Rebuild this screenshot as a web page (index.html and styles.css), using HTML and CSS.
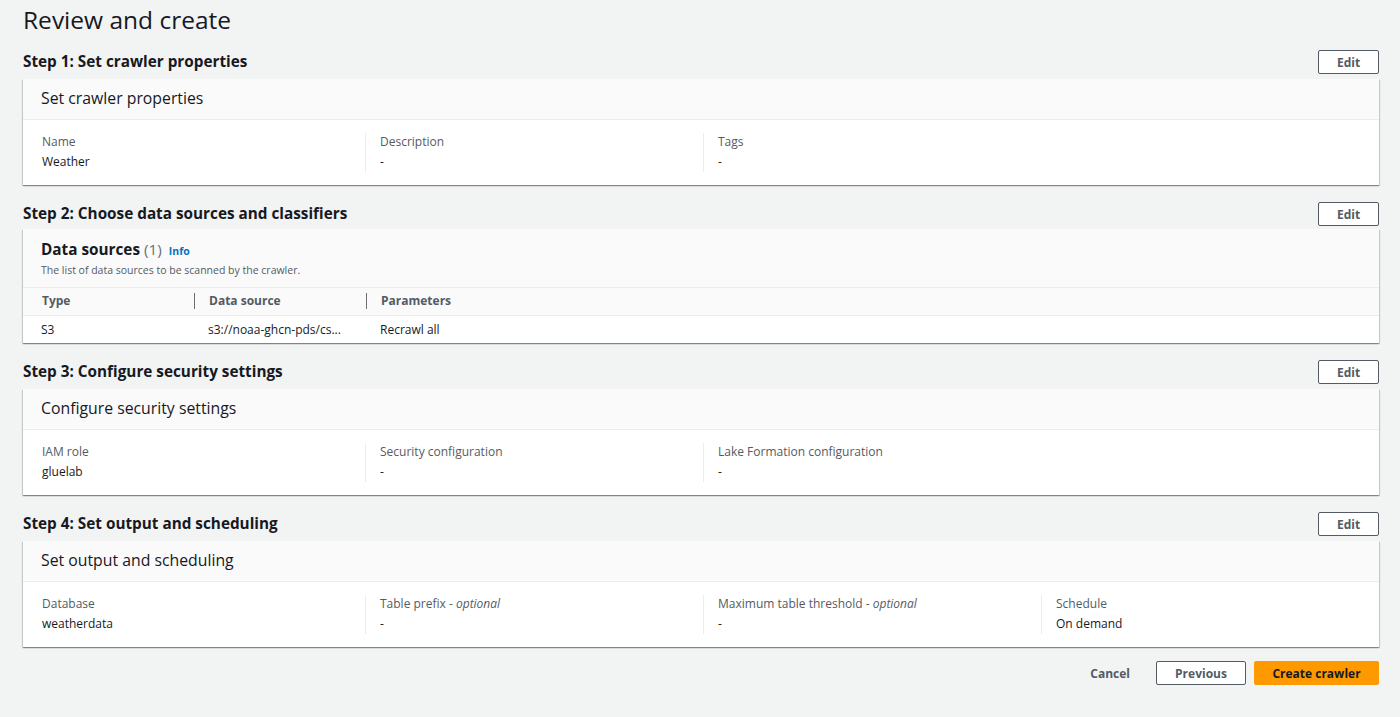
FILE: index.html
```html
<!DOCTYPE html>
<html lang="en">
<head>
  <meta charset="UTF-8" />
  <meta name="viewport" content="width=device-width, initial-scale=1.0" />
  <title>Review and create</title>
  <link rel="stylesheet" href="styles.css">
</head>
<body>
  <main class="page">
    <h1 class="page-title">Review and create</h1>

    <!-- Step 1 -->
    <section class="step">
      <div class="step-head">
        <h2>Step 1: Set crawler properties</h2>
        <button class="btn">Edit</button>
      </div>
      <div class="card">
        <div class="card-header"><h3>Set crawler properties</h3></div>
        <div class="kv">
          <div class="kv-col"><div class="kv-label">Name</div><div class="kv-value">Weather</div></div>
          <div class="kv-col"><div class="kv-label">Description</div><div class="kv-value">-</div></div>
          <div class="kv-col"><div class="kv-label">Tags</div><div class="kv-value">-</div></div>
          <div class="kv-col kv-empty"></div>
        </div>
      </div>
    </section>

    <!-- Step 2 -->
    <section class="step">
      <div class="step-head">
        <h2>Step 2: Choose data sources and classifiers</h2>
        <button class="btn">Edit</button>
      </div>
      <div class="card card-table">
        <div class="table-header">
          <h3 class="table-title">Data sources <span class="count">(1)</span> <a class="info" href="#">Info</a></h3>
          <p class="table-desc">The list of data sources to be scanned by the crawler.</p>
        </div>
        <table class="data-table">
          <thead>
            <tr>
              <th class="col-type"><span>Type</span></th>
              <th class="col-source"><span>Data source</span></th>
              <th><span>Parameters</span></th>
            </tr>
          </thead>
          <tbody>
            <tr>
              <td>S3</td>
              <td>s3://noaa-ghcn-pds/cs...</td>
              <td>Recrawl all</td>
            </tr>
          </tbody>
        </table>
      </div>
    </section>

    <!-- Step 3 -->
    <section class="step">
      <div class="step-head">
        <h2>Step 3: Configure security settings</h2>
        <button class="btn">Edit</button>
      </div>
      <div class="card">
        <div class="card-header"><h3>Configure security settings</h3></div>
        <div class="kv">
          <div class="kv-col"><div class="kv-label">IAM role</div><div class="kv-value">gluelab</div></div>
          <div class="kv-col"><div class="kv-label">Security configuration</div><div class="kv-value">-</div></div>
          <div class="kv-col"><div class="kv-label">Lake Formation configuration</div><div class="kv-value">-</div></div>
          <div class="kv-col kv-empty"></div>
        </div>
      </div>
    </section>

    <!-- Step 4 -->
    <section class="step">
      <div class="step-head">
        <h2>Step 4: Set output and scheduling</h2>
        <button class="btn">Edit</button>
      </div>
      <div class="card">
        <div class="card-header"><h3>Set output and scheduling</h3></div>
        <div class="kv">
          <div class="kv-col"><div class="kv-label">Database</div><div class="kv-value">weatherdata</div></div>
          <div class="kv-col"><div class="kv-label">Table prefix - <i>optional</i></div><div class="kv-value">-</div></div>
          <div class="kv-col"><div class="kv-label">Maximum table threshold - <i>optional</i></div><div class="kv-value">-</div></div>
          <div class="kv-col"><div class="kv-label">Schedule</div><div class="kv-value">On demand</div></div>
        </div>
      </div>
    </section>

    <div class="actions">
      <button class="btn btn-link">Cancel</button>
      <button class="btn btn-prev">Previous</button>
      <button class="btn btn-primary">Create crawler</button>
    </div>
  </main>
</body>
</html>
```

FILE: styles.css
```css
/* Global Styles */
* {
  box-sizing: border-box;
}
body {
  margin: 0;
  font-family: 'Open Sans', 'Liberation Sans', sans-serif;
  background-color: #f2f3f3;
  color: #16191f;
}
.page {
  padding: 4px 21px 20px 23px;
}
.page-title {
  margin: 0 0 14px;
  font-size: 24.5px;
  font-weight: 400;
  line-height: 32px;
  color: #16191f;
}

/* Steps */
.step {
  margin-bottom: 17px;
}
.step-head {
  display: flex;
  justify-content: space-between;
  align-items: center;
  height: 24px;
  margin-bottom: 5px;
}
.step-head h2 {
  margin: 0 0 2px;
  font-size: 15.3px;
  font-weight: 700;
}

/* Buttons */
.btn {
  font-family: inherit;
  font-size: 12px;
  font-weight: 700;
  color: #545b64;
  background-color: #fff;
  border: 1px solid #545b64;
  border-radius: 2px;
  height: 24px;
  min-width: 61px;
  padding: 0 12px;
  cursor: pointer;
}
.btn-link {
  border-color: transparent;
  background: none;
  min-width: 0;
}
.btn-prev {
  width: 90px;
}
.btn-primary {
  width: 125px;
  background-color: #ff9900;
  border-color: #ff9900;
  color: #16191f;
}

/* Cards */
.card {
  background-color: #fff;
  box-shadow: 0 1px 1px 0 rgba(0, 28, 36, 0.3), 1px 1px 1px 0 rgba(0, 28, 36, 0.15), -1px 1px 1px 0 rgba(0, 28, 36, 0.15);
}
.card-table {
  margin-top: -2px;
}
.card-header {
  height: 41px;
  display: flex;
  align-items: center;
  padding: 0 18px 3px;
  background-color: #fafafa;
  border-bottom: 1px solid #eaeded;
}
.card-header h3 {
  margin: 0;
  font-size: 15.8px;
  font-weight: 400;
}

/* Key-value columns */
.kv {
  display: grid;
  grid-template-columns: repeat(4, 1fr);
  padding: 13px 0 13px 4px;
}
.kv-col {
  padding-left: 14px;
  border-left: 1px solid #eaeded;
  min-height: 39px;
}
.kv-col:first-child,
.kv-empty {
  border-left-color: transparent;
}
.kv-label {
  font-size: 12px;
  line-height: 18px;
  color: #545b64;
  margin-bottom: 2px;
}
.kv-value {
  font-size: 12px;
  line-height: 18px;
}

/* Table */
.table-header {
  padding: 9px 18px 9px;
  background-color: #fafafa;
  border-bottom: 1px solid #eaeded;
}
.table-title {
  margin: 0;
  font-size: 15.3px;
  font-weight: 700;
  line-height: 22px;
}
.count {
  font-weight: 400;
  color: #687078;
}
.info {
  font-size: 10.5px;
  font-weight: 700;
  color: #0073bb;
  text-decoration: none;
  margin-left: 3px;
}
.table-desc {
  margin: 0;
  font-size: 10.5px;
  line-height: 16px;
  color: #545b64;
}
.data-table {
  width: 100%;
  border-collapse: collapse;
  font-size: 12px;
}
.data-table th {
  text-align: left;
  font-weight: 700;
  color: #545b64;
  background-color: #fafafa;
  height: 27px;
  padding: 0;
  border-bottom: 1px solid #eaeded;
}
.data-table th span {
  display: block;
  padding: 0 14px;
  border-left: 1px solid #687078;
  line-height: 16px;
}
.data-table th:first-child span {
  border-left-color: transparent;
  padding-left: 18px;
}
.data-table .col-type {
  width: 171px;
}
.data-table .col-source {
  width: 172px;
}
.data-table td {
  height: 28px;
  padding: 0 14px;
}
.data-table td:first-child {
  padding-left: 18px;
}

/* Footer actions */
.actions {
  display: flex;
  justify-content: flex-end;
  gap: 8px;
  margin-top: -3px;
}
.actions .btn-link {
  margin-right: 5px;
}
```
